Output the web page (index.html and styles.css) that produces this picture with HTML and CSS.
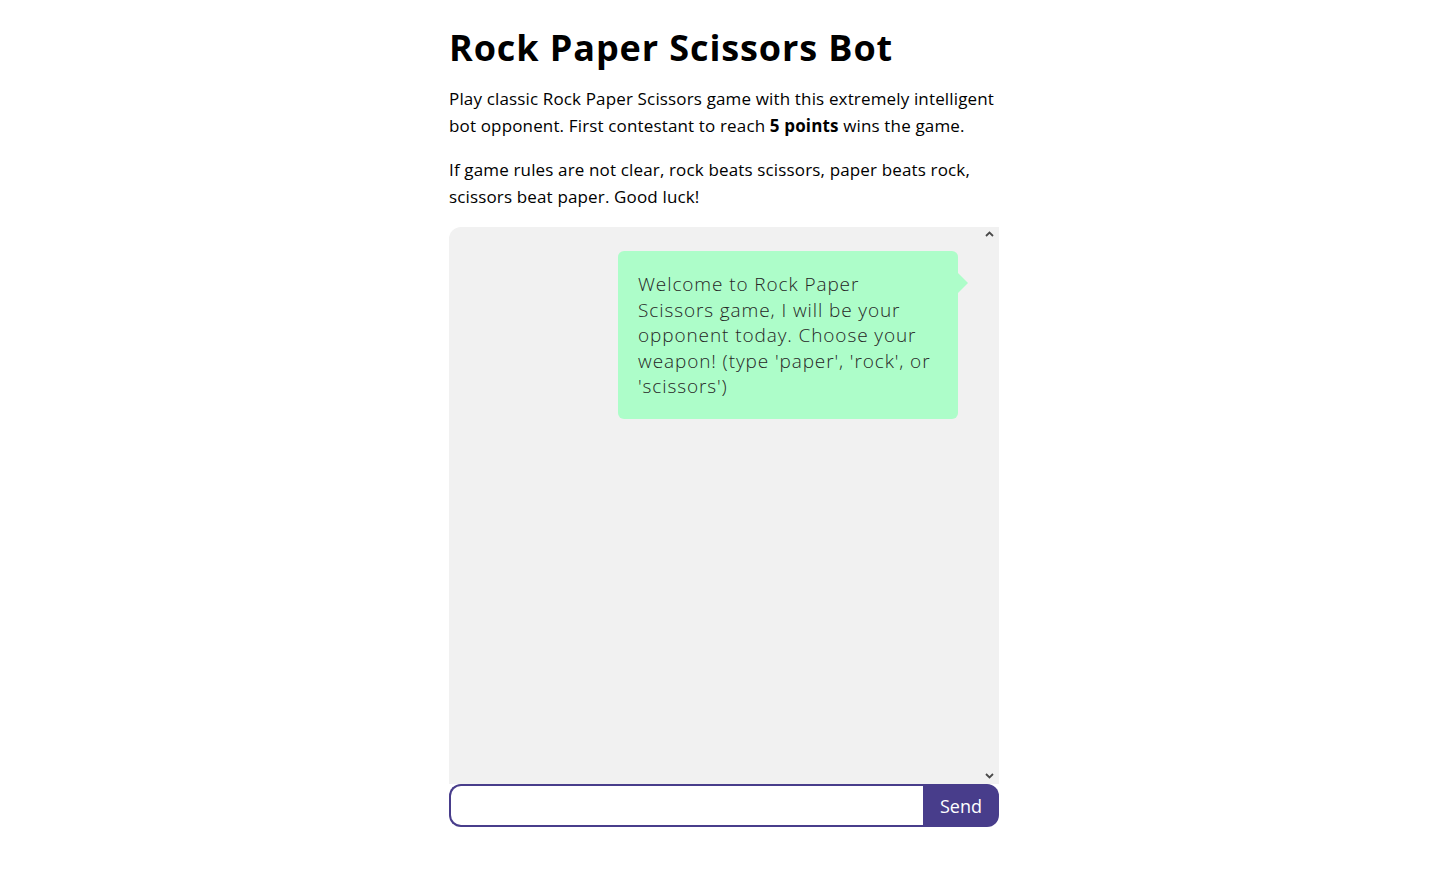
FILE: index.html
```html
<!DOCTYPE html>
<html lang="en">
<head>
<meta charset="utf-8">
<title>Rock Paper Scissors Bot</title>
<link rel="stylesheet" href="styles.css">
</head>
<body>
<main class="page">
  <h1 class="title">Rock Paper Scissors Bot</h1>
  <p class="intro">Play classic Rock Paper Scissors game with this extremely intelligent bot opponent. First contestant to reach <strong>5 points</strong> wins the game.</p>
  <p class="intro intro-last">If game rules are not clear, rock beats scissors, paper beats rock, scissors beat paper. Good luck!</p>
  <section class="chat">
    <div class="messages">
      <div class="bubble">Welcome to Rock Paper Scissors game, I will be your opponent today. Choose your weapon! (type 'paper', 'rock', or 'scissors')</div>
    </div>
    <svg class="scroll-arrow arrow-up" width="9" height="6" viewBox="0 0 9 6"><path d="M1 5 L4.5 1.5 L8 5" fill="none" stroke="#4a4a4a" stroke-width="1.8"/></svg>
    <svg class="scroll-arrow arrow-down" width="9" height="6" viewBox="0 0 9 6"><path d="M1 1 L4.5 4.5 L8 1" fill="none" stroke="#4a4a4a" stroke-width="1.8"/></svg>
  </section>
  <form class="composer">
    <input class="composer-input" type="text" aria-label="Message">
    <button class="composer-send" type="button">Send</button>
  </form>
</main>
</body>
</html>
```

FILE: styles.css
```css
* { box-sizing: border-box; }
html, body { margin: 0; padding: 0; background: #fff; }
body {
  font-family: "Open Sans", "DejaVu Sans", sans-serif;
  color: #000;
}
.page {
  width: 550px;
  margin: 0 auto;
  padding-top: 26px;
  position: relative;
  left: -0.5px;
}
.title {
  margin: 0 0 15px;
  font-size: 36px;
  line-height: 44px;
  font-weight: 700;
  letter-spacing: 0.9px;
}
.intro {
  margin: 0 0 17px;
  font-size: 17px;
  line-height: 27px;
  letter-spacing: 0.15px;
}
.intro strong { font-weight: 700; }
.intro-last { margin-bottom: 17px; }
.chat {
  position: relative;
  height: 557px;
  background: #f1f1f1;
  border-top-left-radius: 12px;
}
.messages {
  display: flex;
  flex-direction: column;
  align-items: flex-end;
  padding: 24px 41px 0 0;
}
.bubble {
  position: relative;
  width: 340px;
  padding: 21px 20px 19px;
  background: #adfdc9;
  border-radius: 6px;
  font-size: 19px;
  line-height: 25.5px;
  font-weight: 300;
  letter-spacing: 0.9px;
  color: #262626;
}
.bubble::after {
  content: "";
  position: absolute;
  right: -10px;
  top: 22px;
  border-style: solid;
  border-width: 10px 0 10px 10px;
  border-color: transparent transparent transparent #adfdc9;
}
.scroll-arrow { position: absolute; right: 5px; }
.arrow-up { top: 4px; }
.arrow-down { bottom: 5px; }
.composer {
  display: flex;
  height: 43px;
}
.composer-input {
  flex: 1;
  min-width: 0;
  margin: 0;
  border: 2px solid #483d8b;
  border-right: none;
  border-radius: 12px 0 0 12px;
  outline: none;
  padding: 0 12px;
  font-size: 16px;
  background: #fff;
}
.composer-send {
  width: 76px;
  margin: 0;
  border: none;
  border-radius: 0 12px 12px 0;
  background: #483d8b;
  color: #fff;
  font-family: "Open Sans", "DejaVu Sans", sans-serif;
  font-size: 18px;
  padding: 0;
}
```
